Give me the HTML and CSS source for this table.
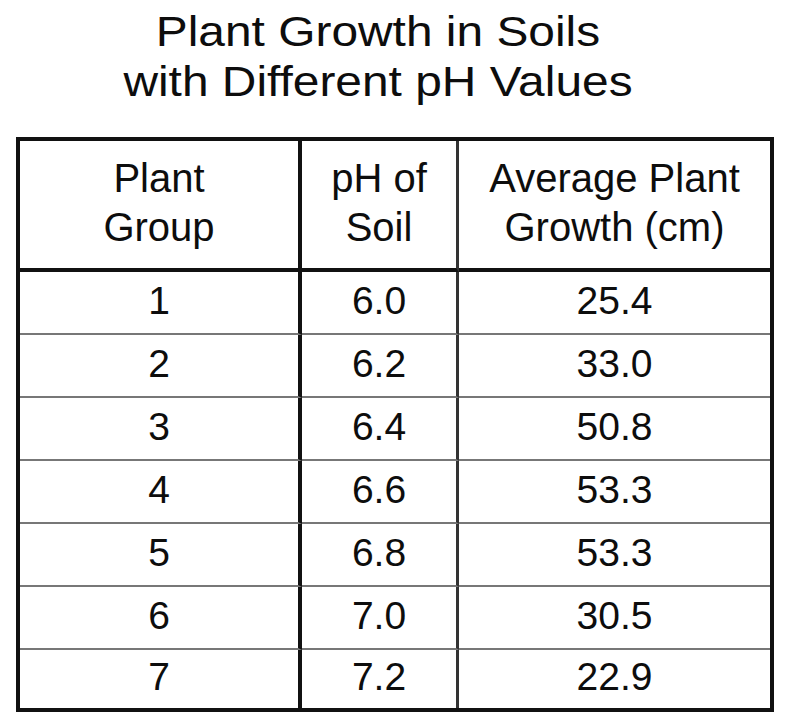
FILE: index.html
```html
<!DOCTYPE html>
<html lang="en">
<head>
<meta charset="utf-8">
<title>Plant Growth in Soils with Different pH Values</title>
<link rel="stylesheet" href="styles.css">
</head>
<body>
<div class="page">
  <h1 class="title">Plant Growth in Soils<br>with Different pH Values</h1>
  <table class="data">
    <colgroup><col class="c1"><col class="c2"><col class="c3"></colgroup>
    <thead>
      <tr><th>Plant<br>Group</th><th>pH of<br>Soil</th><th>Average Plant<br>Growth (cm)</th></tr>
    </thead>
    <tbody>
      <tr><td>1</td><td>6.0</td><td>25.4</td></tr>
      <tr><td>2</td><td>6.2</td><td>33.0</td></tr>
      <tr><td>3</td><td>6.4</td><td>50.8</td></tr>
      <tr><td>4</td><td>6.6</td><td>53.3</td></tr>
      <tr><td>5</td><td>6.8</td><td>53.3</td></tr>
      <tr><td>6</td><td>7.0</td><td>30.5</td></tr>
      <tr><td>7</td><td>7.2</td><td>22.9</td></tr>
    </tbody>
  </table>
</div>
</body>
</html>
```

FILE: styles.css
```css
html, body {
  margin: 0;
  padding: 0;
  background: #fff;
}
body {
  font-family: "Liberation Sans", Arial, sans-serif;
  color: #0d0d0d;
}
.page {
  padding-top: 7px;
}
.title {
  width: 540px;
  margin: 0 0 0 108px;
  font-size: 42px;
  font-weight: normal;
  line-height: 50px;
  text-align: center;
  transform: scaleX(1.14);
}
.data {
  margin: 30px 0 0 16px;
  width: 758px;
  table-layout: fixed;
  border-collapse: separate;
  border-spacing: 0;
  border: 4px solid #111;
  font-size: 39px;
}
.c1 { width: 282px; }
.c2 { width: 157px; }
.c3 { width: 311px; }
.data th,
.data td {
  padding: 0;
  text-align: center;
  vertical-align: middle;
  font-weight: normal;
}
.data th:nth-child(1),
.data td:nth-child(1) {
  border-right: 4px solid #111;
}
.data th:nth-child(2),
.data td:nth-child(2) {
  border-right: 3px solid #333;
}
.data thead tr {
  height: 131px;
}
.data th {
  font-size: 40px;
  border-bottom: 4px solid #111;
  line-height: 49px;
  padding-bottom: 4px;
}
.data tbody tr {
  height: 63px;
}
.data tbody tr:last-child {
  height: 58px;
}
.data td {
  border-bottom: 2px solid #777;
  line-height: 1.15;
  padding-bottom: 3px;
}
.data tbody tr:last-child td {
  border-bottom: none;
}
```
